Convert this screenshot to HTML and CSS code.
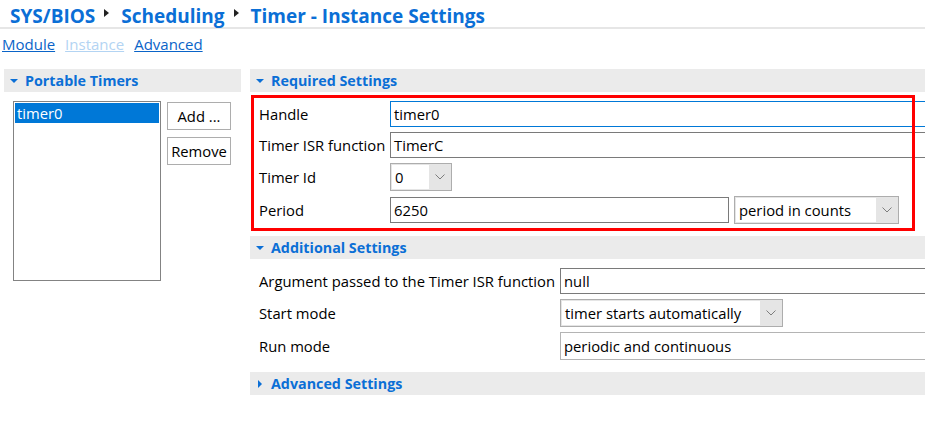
FILE: index.html
```html
<!DOCTYPE html>
<html>
<head>
<meta charset="utf-8">
<link rel="stylesheet" href="styles.css">
</head>
<body>
<div class="titlebar">
  <span class="crumb">SYS/BIOS</span><span class="sep"></span><span class="crumb">Scheduling</span><span class="sep"></span><span class="crumb">Timer - Instance Settings</span>
</div>
<div class="links">
  <a class="link">Module</a><a class="link disabled">Instance</a><a class="link">Advanced</a>
</div>
<div class="main">
  <div class="leftcol">
    <div class="header"><span class="tri down"></span>Portable Timers</div>
    <div class="listarea">
      <div class="list"><div class="item sel">timer0</div></div>
      <div class="buttons">
        <div class="btn">Add ...</div>
        <div class="btn">Remove</div>
      </div>
    </div>
  </div>
  <div class="rightcol">
    <div class="header"><span class="tri down"></span>Required Settings</div>
    <div class="section required">
      <div class="row"><div class="label">Handle</div><div class="input focus">timer0</div></div>
      <div class="row"><div class="label">Timer ISR function</div><div class="input">TimerC</div></div>
      <div class="row"><div class="label">Timer Id</div><div class="combo small"><span class="ctext">0</span><span class="cbtn"><svg width="10" height="6" viewBox="0 0 10 6"><path d="M0.5 0.5 L5 5 L9.5 0.5" fill="none" stroke="#707070" stroke-width="0.9"/></svg></span></div></div>
      <div class="row"><div class="label">Period</div><div class="input period">6250</div><div class="combo units"><span class="ctext">period in counts</span><span class="cbtn"><svg width="10" height="6" viewBox="0 0 10 6"><path d="M0.5 0.5 L5 5 L9.5 0.5" fill="none" stroke="#707070" stroke-width="0.9"/></svg></span></div></div>
      <div class="redbox"></div>
    </div>
    <div class="header"><span class="tri down"></span>Additional Settings</div>
    <div class="section additional">
      <div class="row"><div class="label">Argument passed to the Timer ISR function</div><div class="input">null</div></div>
      <div class="row"><div class="label">Start mode</div><div class="combo start"><span class="ctext">timer starts automatically</span><span class="cbtn"><svg width="10" height="6" viewBox="0 0 10 6"><path d="M0.5 0.5 L5 5 L9.5 0.5" fill="none" stroke="#707070" stroke-width="0.9"/></svg></span></div></div>
      <div class="row"><div class="label">Run mode</div><div class="input readonly">periodic and continuous</div></div>
    </div>
    <div class="header"><span class="tri right"></span>Advanced Settings</div>
  </div>
</div>
</body>
</html>
```
FILE: styles.css
```css
html, body {
  margin: 0;
  padding: 0;
  background: #ffffff;
  overflow: hidden;
  font-family: "Open Sans", "Noto Sans", sans-serif;
  font-size: 14.8px;
  color: #000000;
}
.titlebar {
  height: 29px;
  border-bottom: 2px solid #e6e6e6;
  padding: 4px 0 0 10px;
  display: flex;
  align-items: center;
  box-sizing: border-box;
}
.crumb {
  font-weight: bold;
  font-size: 19px;
  color: #0b6fd6;
  line-height: 24px;
}
.sep {
  display: inline-block;
  width: 0;
  height: 0;
  border-top: 4px solid transparent;
  border-bottom: 4px solid transparent;
  border-left: 5px solid #222;
  margin: 0 12px 0 9px;
  position: relative;
  top: -3px;
}
.links {
  display: flex;
  gap: 10px;
  padding: 5px 0 0 2px;
  height: 35px;
  box-sizing: border-box;
  line-height: 20px;
}
.link {
  color: #0a64c8;
  text-decoration: underline;
  font-size: 15px;
}
.link.disabled {
  color: #b3d4f3;
}
.main {
  display: flex;
  padding-top: 5px;
  gap: 9px;
}
.leftcol {
  width: 237px;
  margin-left: 4px;
  flex: none;
}
.rightcol {
  flex: 1;
  min-width: 0;
}
.header {
  height: 23px;
  background: #ebebeb;
  color: #0b6fd6;
  font-weight: bold;
  font-size: 14.3px;
  display: flex;
  align-items: center;
  padding-left: 6px;
  box-sizing: border-box;
}
.tri {
  display: inline-block;
  width: 0;
  height: 0;
  margin-right: 7px;
}
.tri.down {
  border-left: 4px solid transparent;
  border-right: 4px solid transparent;
  border-top: 4px solid #0b6fd6;
}
.tri.right {
  border-top: 4px solid transparent;
  border-bottom: 4px solid transparent;
  border-left: 4px solid #0b6fd6;
  margin-left: 2px;
  margin-right: 9px;
}
.listarea {
  display: flex;
  gap: 6px;
  padding: 9px 0 0 9px;
}
.list {
  width: 148px;
  height: 180px;
  border: 1px solid #838383;
  box-sizing: border-box;
  padding: 1px;
}
.item {
  height: 20px;
  line-height: 20px;
  padding-left: 2px;
}
.item.sel {
  background: #0078d7;
  color: #ffffff;
}
.buttons {
  display: flex;
  flex-direction: column;
  gap: 7px;
  padding-top: 1px;
}
.btn {
  width: 64px;
  height: 28px;
  border: 1px solid #adadad;
  box-sizing: border-box;
  display: flex;
  align-items: center;
  justify-content: center;
  background: #ffffff;
}
.section {
  position: relative;
  display: flex;
  flex-direction: column;
  gap: 5px;
}
.section.required {
  padding: 9px 0 12px 9px;
}
.section.additional {
  padding: 9px 0 12px 9px;
}
.row {
  display: flex;
  align-items: center;
  width: 700px;
}
.section.required .label {
  width: 131px;
  flex: none;
}
.section.additional .label {
  width: 301px;
  flex: none;
}
.input {
  flex: 1;
  height: 26px;
  border: 1px solid #7a7a7a;
  box-sizing: border-box;
  padding-left: 3px;
  display: flex;
  align-items: center;
}
.input.focus {
  border-color: #0078d7;
}
.input.readonly {
  border-color: #b4b4b4;
  height: 28px;
}
.input.period {
  flex: none;
  width: 339px;
}
.combo {
  height: 28px;
  border: 1px solid #adadad;
  box-sizing: border-box;
  display: flex;
  background: #e5e5e5;
}
.ctext {
  flex: 1;
  background: #ffffff;
  padding-left: 3px;
  display: flex;
  align-items: center;
  margin: 1px 0 1px 1px;
}
.cbtn {
  width: 22px;
  display: flex;
  align-items: center;
  justify-content: center;
}
.combo.small {
  width: 62px;
}
.combo.units {
  width: 165px;
  margin-left: 5px;
}
.combo.start {
  width: 223px;
}
.redbox {
  position: absolute;
  left: 1px;
  top: 3px;
  width: 664px;
  height: 136px;
  border: 3px solid #ff0000;
  box-sizing: border-box;
  pointer-events: none;
}
```
